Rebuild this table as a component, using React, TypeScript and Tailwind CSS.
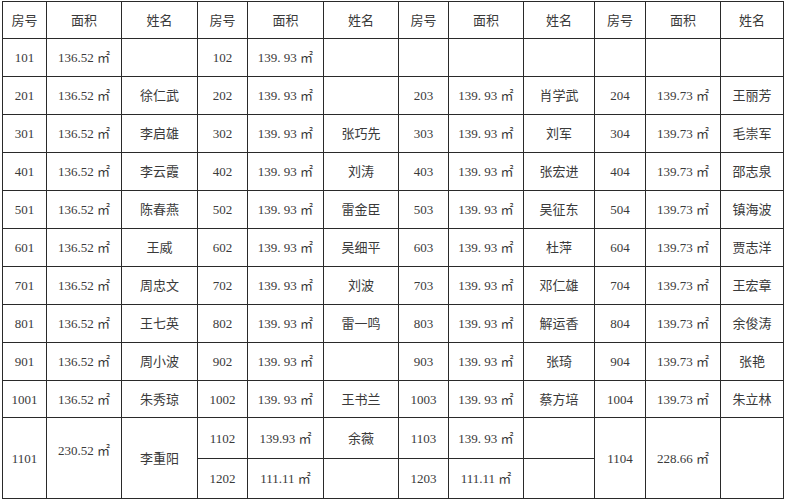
const widths = [44, 75, 76, 50, 76, 75, 50, 75, 71, 51, 75, 63];

type Row = string[];

const rows: Row[] = [
  ['101', '136.52 ㎡', '', '102', '139. 93 ㎡', '', '', '', '', '', '', ''],
  ['201', '136.52 ㎡', '徐仁武', '202', '139. 93 ㎡', '', '203', '139. 93 ㎡', '肖学武', '204', '139.73 ㎡', '王丽芳'],
  ['301', '136.52 ㎡', '李启雄', '302', '139. 93 ㎡', '张巧先', '303', '139. 93 ㎡', '刘军', '304', '139.73 ㎡', '毛崇军'],
  ['401', '136.52 ㎡', '李云霞', '402', '139. 93 ㎡', '刘涛', '403', '139. 93 ㎡', '张宏进', '404', '139.73 ㎡', '邵志泉'],
  ['501', '136.52 ㎡', '陈春燕', '502', '139. 93 ㎡', '雷金臣', '503', '139. 93 ㎡', '吴征东', '504', '139.73 ㎡', '镇海波'],
  ['601', '136.52 ㎡', '王威', '602', '139. 93 ㎡', '吴细平', '603', '139. 93 ㎡', '杜萍', '604', '139.73 ㎡', '贾志洋'],
  ['701', '136.52 ㎡', '周忠文', '702', '139. 93 ㎡', '刘波', '703', '139. 93 ㎡', '邓仁雄', '704', '139.73 ㎡', '王宏章'],
  ['801', '136.52 ㎡', '王七英', '802', '139. 93 ㎡', '雷一鸣', '803', '139. 93 ㎡', '解运香', '804', '139.73 ㎡', '余俊涛'],
  ['901', '136.52 ㎡', '周小波', '902', '139. 93 ㎡', '', '903', '139. 93 ㎡', '张琦', '904', '139.73 ㎡', '张艳'],
  ['1001', '136.52 ㎡', '朱秀琼', '1002', '139. 93 ㎡', '王书兰', '1003', '139. 93 ㎡', '蔡方培', '1004', '139.73 ㎡', '朱立林'],
];

const headers = ['房号', '面积', '姓名', '房号', '面积', '姓名', '房号', '面积', '姓名', '房号', '面积', '姓名'];

const cell = 'border border-[#2a2a2a] text-center align-middle p-0';

export default function App() {
  return (
    <div className="w-[785px] h-[500px] bg-white pl-[2px] pt-[1px] overflow-hidden">
      <table
        className="border-collapse table-fixed w-[781px] text-[13px] text-[#3a3a3a] leading-none"
        style={{ fontFamily: '"Liberation Serif", "Noto Sans CJK SC", serif' }}
      >
        <colgroup>
          {widths.map((w, i) => (
            <col key={i} style={{ width: w }} />
          ))}
        </colgroup>
        <tbody>
          <tr className="h-[37px]">
            {headers.map((h, i) => (
              <td key={i} className={cell}>{h}</td>
            ))}
          </tr>
          {rows.map((r, ri) => (
            <tr key={ri} className={ri === 9 ? 'h-[37px]' : 'h-[38px]'}>
              {r.map((c, ci) => (
                <td key={ci} className={cell}>{c}</td>
              ))}
            </tr>
          ))}
          <tr className="h-[41px]">
            <td rowSpan={2} className={cell}>1101</td>
            <td rowSpan={2} className={cell}><span className="relative -top-[8px]">230.52 ㎡</span></td>
            <td rowSpan={2} className={cell}>李重阳</td>
            <td className={cell}>1102</td>
            <td className={cell}>139.93 ㎡</td>
            <td className={cell}>余薇</td>
            <td className={cell}>1103</td>
            <td className={cell}>139. 93 ㎡</td>
            <td className={cell}></td>
            <td rowSpan={2} className={cell}>1104</td>
            <td rowSpan={2} className={cell}>228.66 ㎡</td>
            <td rowSpan={2} className={cell}></td>
          </tr>
          <tr className="h-[40px]">
            <td className={cell}>1202</td>
            <td className={cell}>111.11 ㎡</td>
            <td className={cell}></td>
            <td className={cell}>1203</td>
            <td className={cell}>111.11 ㎡</td>
            <td className={cell}></td>
          </tr>
        </tbody>
      </table>
    </div>
  );
}
